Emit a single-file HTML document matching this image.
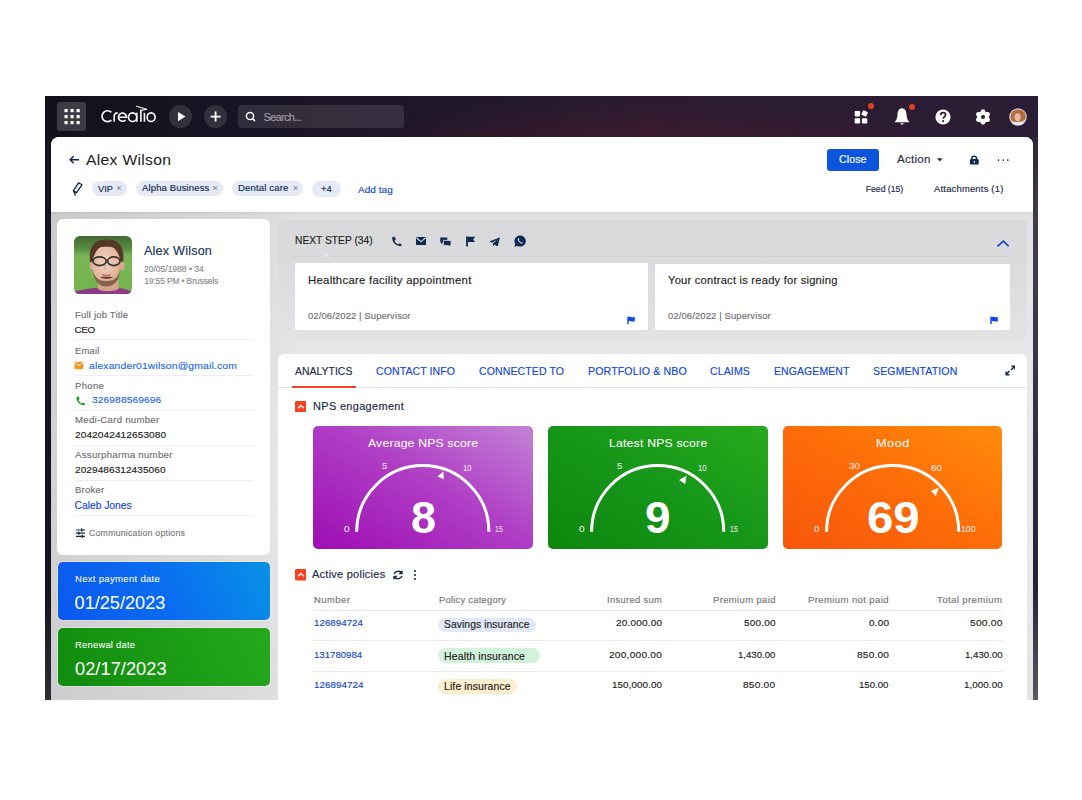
<!DOCTYPE html>
<html><head><meta charset="utf-8"><style>
html,body{margin:0;padding:0;background:#fff;width:1082px;height:800px;overflow:hidden;}
body{position:relative;font-family:"Liberation Sans",sans-serif;}
.t{position:absolute;white-space:pre;line-height:1;}
.r{position:absolute;display:block;}
</style></head><body>
<div class="r" style="left:45.0px;top:96.0px;width:993.0px;height:603.5px;background:linear-gradient(180deg,rgba(0,0,0,0) 0%,rgba(0,0,0,0) 80%,rgba(90,90,96,0.7) 100%),linear-gradient(90deg,#13111d 0%,#1c1526 40%,#2a1c30 70%,#2a1d33 100%);"></div>
<div class="r" style="left:1031.5px;top:137.0px;width:6.5px;height:562.5px;background:linear-gradient(180deg,#30243a 0%,#433d4a 15%,#3a3548 40%,#24213a 80%,#5a5a62 100%);"></div>
<div class="r" style="left:45.0px;top:137.0px;width:6.0px;height:562.5px;background:linear-gradient(180deg,#15131d 0%,#15141e 80%,#2e2e36 100%);"></div>
<div class="r" style="left:45.0px;top:96.0px;width:993.0px;height:41.0px;background:radial-gradient(ellipse 300px 36px at 590px 42px,rgba(85,25,45,0.4),rgba(85,25,45,0) 100%),linear-gradient(90deg,#13111d 0%,#1d1628 35%,#2c1b30 60%,#2b1d35 100%);"></div>
<div class="r" style="left:51.0px;top:137.0px;width:981.5px;height:562.5px;background:linear-gradient(90deg,rgba(0,0,0,0.1) 0px,rgba(0,0,0,0.04) 200px,rgba(0,0,0,0) 260px),linear-gradient(180deg,#dedee0 0%,#e6e6e8 30%,#ebebed 60%,#e4e4e6 100%);border-radius:8px 8px 0 0;"></div>
<div class="r" style="left:51.0px;top:137.0px;width:981.5px;height:75.4px;background:#fff;border-radius:8px 8px 0 0;"></div>
<div class="r" style="left:51.0px;top:212.4px;width:981.5px;height:2.6px;background:linear-gradient(180deg,rgba(0,0,0,0.05),rgba(0,0,0,0));"></div>
<div class="r" style="left:57.0px;top:102.0px;width:29.0px;height:29.0px;background:#3b3a45;border-radius:3px;"></div>
<svg class="r" style="left:57.0px;top:102.0px;" width="29.0" height="29.0" viewBox="0 0 29 29" preserveAspectRatio="none"><rect x="7.5" y="7" width="3.2" height="3.2" fill="#fff"/><rect x="13.5" y="7" width="3.2" height="3.2" fill="#fff"/><rect x="19.5" y="7" width="3.2" height="3.2" fill="#fff"/><rect x="7.5" y="13" width="3.2" height="3.2" fill="#fff"/><rect x="13.5" y="13" width="3.2" height="3.2" fill="#fff"/><rect x="19.5" y="13" width="3.2" height="3.2" fill="#fff"/><rect x="7.5" y="19" width="3.2" height="3.2" fill="#fff"/><rect x="13.5" y="19" width="3.2" height="3.2" fill="#fff"/><rect x="19.5" y="19" width="3.2" height="3.2" fill="#fff"/></svg>
<svg class="r" style="left:96.0px;top:102.0px;" width="64.0" height="24.0" viewBox="0 0 64 24" preserveAspectRatio="none"><g fill="none" stroke="#fff" stroke-width="1.6" stroke-linecap="butt"><path d="M15.4 10.4 A5.45 5.45 0 1 0 15.4 18.0"/><path d="M18.2 19.7 V14.6 C18.2 11.9 19.6 10.9 21.6 10.9"/><path d="M22.6 15.2 H30.6 A4.1 4.1 0 1 0 29.6 17.9"/><ellipse cx="36.6" cy="15.2" rx="4.1" ry="4.3"/><path d="M40.8 10.8 V19.7"/><path d="M44.9 7.6 V19.7"/><path d="M48.4 10.9 V19.7"/><ellipse cx="55.1" cy="15.2" rx="4.0" ry="4.3"/></g><path d="M40.3 4.2 L51.2 7.4 L45.6 8.3 L50.6 7.3 Z" fill="#fff" stroke="#fff" stroke-width="0.7" stroke-linejoin="round"/></svg>
<div class="r" style="left:168.8px;top:104.9px;width:23.2px;height:23.2px;background:#34303e;border-radius:50%;"></div>
<svg class="r" style="left:168.8px;top:104.9px;" width="23.2" height="23.2" viewBox="0 0 23.19999999999999 23.19999999999999" preserveAspectRatio="none"><path d="M9 7 L16.5 11.6 L9 16.2 Z" fill="#fff"/></svg>
<div class="r" style="left:203.8px;top:104.9px;width:23.2px;height:23.2px;background:#34303e;border-radius:50%;"></div>
<svg class="r" style="left:203.8px;top:104.9px;" width="23.2" height="23.2" viewBox="0 0 23.19999999999999 23.19999999999999" preserveAspectRatio="none"><path d="M11.6 6.6 V16.6 M6.6 11.6 H16.6" stroke="#fff" stroke-width="1.8"/></svg>
<div class="r" style="left:238.4px;top:105.0px;width:165.8px;height:22.8px;background:rgba(255,255,255,0.11);border-radius:3px;"></div>
<svg class="r" style="left:244.0px;top:110.0px;" width="14.0" height="14.0" viewBox="0 0 14 14" preserveAspectRatio="none"><circle cx="6" cy="6" r="3.6" fill="none" stroke="#fff" stroke-width="1.5"/><path d="M8.6 8.6 L11 11" stroke="#fff" stroke-width="1.6"/></svg>
<div class="t " style="left:263.40px;top:112px;font-size:11.05px;letter-spacing:-0.698px;color:#a29ca8;-webkit-text-stroke:0.15px #a29ca8;">Search...</div>
<svg class="r" style="left:852.0px;top:107.0px;" width="20.0" height="19.0" viewBox="0 0 20 19" preserveAspectRatio="none"><rect x="2.7" y="4" width="5.4" height="5.4" rx="0.8" fill="#fff"/><rect x="2.7" y="11.2" width="5.4" height="5.4" rx="0.8" fill="#fff"/><rect x="9.9" y="11.2" width="5.4" height="5.4" rx="0.8" fill="#fff"/><rect x="10.1" y="3.9" width="5.2" height="5.2" rx="0.8" fill="#fff" transform="rotate(25 12.7 6.5)"/></svg>
<div class="r" style="left:868.0px;top:103.3px;width:6.0px;height:6.0px;background:#e2401c;border-radius:50%;"></div>
<svg class="r" style="left:893.0px;top:106.0px;" width="18.0" height="20.0" viewBox="0 0 18 20" preserveAspectRatio="none"><path d="M9 2.2 C5.2 2.6 4.5 6 4.4 9.5 C4.3 12.5 3.2 14.5 1.6 16.2 H16.4 C14.8 14.5 13.7 12.5 13.6 9.5 C13.5 6 12.8 2.6 9 2.2 Z" fill="#fff"/><path d="M7 17.2 H11 L9 19 Z" fill="#fff"/></svg>
<div class="r" style="left:908.6px;top:103.6px;width:6.0px;height:6.0px;background:#e2401c;border-radius:50%;"></div>
<svg class="r" style="left:934.5px;top:108.6px;" width="16.0" height="16.0" viewBox="0 0 16.0 16.0" preserveAspectRatio="none"><circle cx="8" cy="8" r="7.6" fill="#fff"/><path d="M5.6 6.2 C5.6 4.6 6.7 3.7 8.1 3.7 C9.6 3.7 10.6 4.6 10.6 5.9 C10.6 7.6 8.3 7.8 8.3 9.8" fill="none" stroke="#2a1d33" stroke-width="1.7"/><circle cx="8.2" cy="12.1" r="1.1" fill="#2a1d33"/></svg>
<svg class="r" style="left:975.3px;top:108.6px;" width="16.0" height="16.0" viewBox="0 0 16.0 16.0" preserveAspectRatio="none"><g transform="translate(8 8)"><circle cx="0.00" cy="-5.30" r="2.35" fill="#fff"/><circle cx="4.59" cy="-2.65" r="2.35" fill="#fff"/><circle cx="4.59" cy="2.65" r="2.35" fill="#fff"/><circle cx="0.00" cy="5.30" r="2.35" fill="#fff"/><circle cx="-4.59" cy="2.65" r="2.35" fill="#fff"/><circle cx="-4.59" cy="-2.65" r="2.35" fill="#fff"/><circle r="5.9" fill="#fff"/><circle r="2.0" fill="#2a1d33"/></g></svg>
<svg class="r" style="left:1007.8px;top:106.7px;" width="20.0" height="20.0" viewBox="0 0 20.0 20.0" preserveAspectRatio="none"><defs><clipPath id="av"><circle cx="10" cy="10" r="8"/></clipPath></defs><circle cx="10" cy="10" r="8.8" fill="#cdc8cc"/><g clip-path="url(#av)"><rect width="20" height="20" fill="#d8d4d6"/><path d="M3 13 C1.5 7 4 2.5 10 2.5 C16 2.5 18.5 7 17.5 12 C16 14 13 15 10 15 C7 15 4.5 14.5 3 13 Z" fill="#b56c3e"/><ellipse cx="9.6" cy="10.2" rx="3" ry="4" fill="#e2b9a3"/><path d="M3 20 C4 15.5 7 14.5 10 15.5 C13 14.5 16.5 15 17 20 Z" fill="#f0eef0"/></g></svg>
<svg class="r" style="left:64.0px;top:150.0px;" width="26.0" height="20.0" viewBox="0 0 26 20" preserveAspectRatio="none"><path d="M9.6 6.2 L6.2 9.7 L9.6 13.2 M6.4 9.7 H15" fill="none" stroke="#0f2a52" stroke-width="1.5"/></svg>
<div class="t " style="left:86.10px;top:153px;font-size:14.83px;letter-spacing:0.293px;color:#1c1c20;transform:scaleX(1.0573);transform-origin:0 0;">Alex Wilson</div>
<svg class="r" style="left:64.0px;top:176.0px;" width="26.0" height="24.0" viewBox="0 0 26 24" preserveAspectRatio="none"><path d="M14.6 6.8 L18 8.8 L12.4 16.8 L9.4 14.6 Z" fill="none" stroke="#0f2a52" stroke-width="1.3" stroke-linejoin="round"/><path d="M9.6 14.8 L11.4 19.4 M9.8 16.6 L12.2 16.2" fill="none" stroke="#0f2a52" stroke-width="1.4"/></svg>
<div class="r" style="left:92.1px;top:180.6px;width:34.7px;height:15.8px;background:#e5eaf6;border-radius:8px;"></div>
<div class="t " style="left:98.00px;top:185px;font-size:9.16px;letter-spacing:0.011px;color:#0f2a52;transform:scaleX(1.0023);transform-origin:0 0;-webkit-text-stroke:0.15px #0f2a52;">VIP</div>
<div class="t " style="left:116.30px;top:184px;font-size:9.01px;letter-spacing:0.000px;color:#77777c;">×</div>
<div class="r" style="left:136.1px;top:180.6px;width:87.1px;height:15.8px;background:#e5eaf6;border-radius:8px;"></div>
<div class="t " style="left:141.60px;top:184px;font-size:9.16px;letter-spacing:0.129px;color:#0f2a52;transform:scaleX(1.0400);transform-origin:0 0;-webkit-text-stroke:0.15px #0f2a52;">Alpha Business</div>
<div class="t " style="left:212.60px;top:184px;font-size:9.01px;letter-spacing:0.000px;color:#77777c;">×</div>
<div class="r" style="left:231.8px;top:180.6px;width:71.3px;height:15.8px;background:#e5eaf6;border-radius:8px;"></div>
<div class="t " style="left:238.30px;top:184px;font-size:9.16px;letter-spacing:0.136px;color:#0f2a52;transform:scaleX(1.0437);transform-origin:0 0;-webkit-text-stroke:0.15px #0f2a52;">Dental care</div>
<div class="t " style="left:292.90px;top:184px;font-size:9.01px;letter-spacing:0.000px;color:#77777c;">×</div>
<div class="r" style="left:312.0px;top:180.8px;width:28.6px;height:16.2px;background:#e5eaf6;border-radius:8px;"></div>
<div class="t " style="left:321.20px;top:185px;font-size:9.16px;letter-spacing:0.143px;color:#0f2a52;transform:scaleX(1.0206);transform-origin:0 0;-webkit-text-stroke:0.15px #0f2a52;">+4</div>
<div class="t " style="left:358.40px;top:185px;font-size:9.88px;letter-spacing:0.050px;color:#1247d6;transform:scaleX(1.0132);transform-origin:0 0;-webkit-text-stroke:0.15px #1247d6;">Add tag</div>
<div class="r" style="left:827.4px;top:148.7px;width:51.4px;height:22.2px;background:#0b55dd;border-radius:3px;"></div>
<div class="t " style="left:839.20px;top:154px;font-size:10.76px;letter-spacing:0.012px;color:#fff;transform:scaleX(1.0026);transform-origin:0 0;-webkit-text-stroke:0.15px #fff;">Close</div>
<div class="t " style="left:896.60px;top:154px;font-size:10.90px;letter-spacing:0.248px;color:#1b2b4a;transform:scaleX(1.0620);transform-origin:0 0;-webkit-text-stroke:0.15px #1b2b4a;">Action</div>
<svg class="r" style="left:936.0px;top:157.0px;" width="8.0" height="6.0" viewBox="0 0 8 6" preserveAspectRatio="none"><path d="M1 1.2 H6.6 L3.8 4.4 Z" fill="#1b2b4a"/></svg>
<svg class="r" style="left:966.0px;top:152.0px;" width="16.0" height="16.0" viewBox="0 0 16 16" preserveAspectRatio="none"><path d="M5.8 7.5 V6 C5.8 3.6 10.4 3.6 10.4 6 V7.5" fill="none" stroke="#0f2a52" stroke-width="1.5"/><rect x="4" y="7" width="8.7" height="5.6" rx="1.2" fill="#0f2a52"/><rect x="7.8" y="8.9" width="1.1" height="2" fill="#fff"/></svg>
<svg class="r" style="left:996.0px;top:158.0px;" width="15.0" height="4.0" viewBox="0 0 15 4" preserveAspectRatio="none"><circle cx="2.5" cy="2.1" r="0.85" fill="#1b2b4a"/><circle cx="7.3" cy="2.1" r="0.85" fill="#1b2b4a"/><circle cx="11.8" cy="2.1" r="0.85" fill="#1b2b4a"/></svg>
<div class="t " style="left:865.80px;top:185px;font-size:8.72px;letter-spacing:-0.051px;color:#1b2b4a;-webkit-text-stroke:0.15px #1b2b4a;">Feed (15)</div>
<div class="t " style="left:933.70px;top:185px;font-size:8.72px;letter-spacing:0.213px;color:#1b2b4a;transform:scaleX(1.0735);transform-origin:0 0;-webkit-text-stroke:0.15px #1b2b4a;">Attachments (1)</div>
<div class="r" style="left:57.0px;top:218.8px;width:213.0px;height:336.2px;background:#fff;border-radius:6px;"></div>
<svg class="r" style="left:74.3px;top:235.7px;" width="58.0" height="58.2" viewBox="0 0 58.000000000000014 58.19999999999999" preserveAspectRatio="none"><defs><clipPath id="ph"><rect width="58" height="58.2" rx="6"/></clipPath>
<linearGradient id="grass" x1="0" y1="0" x2="0" y2="1"><stop offset="0" stop-color="#3f6a2f"/><stop offset="0.22" stop-color="#5b8c44"/><stop offset="0.35" stop-color="#7ab656"/><stop offset="1" stop-color="#72b24c"/></linearGradient>
<radialGradient id="skin" cx="0.45" cy="0.4" r="0.65"><stop offset="0" stop-color="#f2d2bf"/><stop offset="0.7" stop-color="#e3b69e"/><stop offset="1" stop-color="#c9957b"/></radialGradient></defs>
<g clip-path="url(#ph)"><rect width="58" height="58.2" fill="url(#grass)"/>
<path d="M0 58.2 L0 56 C6 54 14 52.5 22 52 L44 52 C50 52.5 55 54 58 56 L58 58.2 Z" fill="#8c3a88"/>
<path d="M24 44 L24 53 C28 56 40 56 44.5 53 L44.5 44 Z" fill="#d4a489"/>
<path d="M16.5 29 C13.5 12 19 3.6 32.5 3.4 C46 3.2 51.5 12 48.8 29 Z" fill="#553828"/><ellipse cx="48" cy="30" rx="2.6" ry="4.6" fill="#d9a990"/>
<ellipse cx="17.6" cy="30" rx="2" ry="4.2" fill="#d9a990"/>
<ellipse cx="32.5" cy="29.5" rx="14.2" ry="20.5" fill="url(#skin)"/>
<path d="M18 22 C17 10 22 4 32.5 3.8 C43 3.6 48 10 47.2 22 C46 16 44.5 13.5 42 12 C36 10.5 28 10.5 23 12 C20.5 13.5 19 16 18 22 Z" fill="#553828"/>
<path d="M18.8 33 C19.5 45 25 50.5 32.5 50.5 C40 50.5 45.5 45 46.2 33 C45 41 41 45 32.5 45 C24 45 20 41 18.8 33 Z" fill="#6f4a36" opacity="0.75"/>
<path d="M26 41.6 C29 40.2 36 40.2 39 41.6 C36 43.4 29 43.4 26 41.6 Z" fill="#6a4532"/>
<path d="M28.2 38.4 C30.5 39.6 34.5 39.6 36.8 38.4" stroke="#c27572" stroke-width="1.5" fill="none"/>
<ellipse cx="25.6" cy="25.2" rx="6.6" ry="4.4" fill="none" stroke="#3b3634" stroke-width="1.7"/>
<ellipse cx="39.8" cy="25.2" rx="6.2" ry="4.4" fill="none" stroke="#3b3634" stroke-width="1.7"/>
<path d="M32 24.6 H33.6 M19 24 L17 23.4 M46 24 L48 23.4" stroke="#3b3634" stroke-width="1.3"/>
<path d="M31.6 28 C31 31 30.6 33 32 33.6" stroke="#c4907a" stroke-width="1" fill="none"/>
</g></svg>
<div class="t " style="left:144.20px;top:245px;font-size:12.06px;letter-spacing:0.194px;color:#1b3358;transform:scaleX(1.0465);transform-origin:0 0;-webkit-text-stroke:0.15px #1b3358;">Alex Wilson</div>
<div class="t " style="left:144.20px;top:265px;font-size:8.43px;letter-spacing:0.016px;color:#8a8a90;transform:scaleX(1.0058);transform-origin:0 0;-webkit-text-stroke:0.15px #8a8a90;">20/05/1988 • 34</div>
<div class="t " style="left:144.20px;top:277px;font-size:8.43px;letter-spacing:-0.113px;color:#8a8a90;-webkit-text-stroke:0.15px #8a8a90;">19:55 PM • Brussels</div>
<div class="t " style="left:74.50px;top:311px;font-size:9.01px;letter-spacing:0.153px;color:#707076;transform:scaleX(1.0626);transform-origin:0 0;-webkit-text-stroke:0.15px #707076;">Full job Title</div>
<div class="t " style="left:74.50px;top:325px;font-size:9.88px;letter-spacing:-0.299px;color:#1e1e22;-webkit-text-stroke:0.15px #1e1e22;">CEO</div>
<div class="r" style="left:74.5px;top:339.3px;width:178.5px;height:0.8px;background:#efeff1;"></div>
<div class="t " style="left:74.50px;top:347px;font-size:9.01px;letter-spacing:0.192px;color:#707076;transform:scaleX(1.0516);transform-origin:0 0;-webkit-text-stroke:0.15px #707076;">Email</div>
<div class="t " style="left:89.00px;top:361px;font-size:9.88px;letter-spacing:0.166px;color:#1d68ef;transform:scaleX(1.0477);transform-origin:0 0;-webkit-text-stroke:0.15px #1d68ef;">alexander01wilson@gmail.com</div>
<div class="r" style="left:74.5px;top:375.3px;width:178.5px;height:0.8px;background:#efeff1;"></div>
<svg class="r" style="left:74.0px;top:361.0px;" width="10.0" height="9.0" viewBox="0 0 10 9" preserveAspectRatio="none"><path d="M0.5 0.8 H9.3 V8.2 H0.5 Z" fill="#f7941d"/><path d="M0.8 1.2 L4.9 4.8 L9 1.2" fill="none" stroke="#fff" stroke-width="1"/></svg>
<div class="t " style="left:74.50px;top:382px;font-size:9.01px;letter-spacing:0.277px;color:#707076;transform:scaleX(1.0644);transform-origin:0 0;-webkit-text-stroke:0.15px #707076;">Phone</div>
<div class="t " style="left:91.70px;top:395px;font-size:9.88px;letter-spacing:0.119px;color:#1d68ef;transform:scaleX(1.0300);transform-origin:0 0;-webkit-text-stroke:0.15px #1d68ef;">326988569696</div>
<div class="r" style="left:74.5px;top:410.0px;width:178.5px;height:0.8px;background:#efeff1;"></div>
<svg class="r" style="left:75.0px;top:395.5px;" width="10.0" height="9.0" viewBox="0 0 10 9.0" preserveAspectRatio="none"><path d="M1.6 0.8 L3.6 0.6 L4.6 3.2 L3.4 4.3 C4.2 5.8 5.4 6.9 6.8 7.6 L7.9 6.4 L10 7.4 L9.8 9.2 C5 9.4 0.8 5.4 1.6 0.8 Z" fill="#16a016"/></svg>
<div class="t " style="left:74.50px;top:416px;font-size:9.01px;letter-spacing:0.234px;color:#707076;transform:scaleX(1.0709);transform-origin:0 0;-webkit-text-stroke:0.15px #707076;">Medi-Card number</div>
<div class="t " style="left:74.50px;top:430px;font-size:9.88px;letter-spacing:0.085px;color:#1e1e22;transform:scaleX(1.0219);transform-origin:0 0;-webkit-text-stroke:0.15px #1e1e22;">2042042412653080</div>
<div class="r" style="left:74.5px;top:444.8px;width:178.5px;height:0.8px;background:#efeff1;"></div>
<div class="t " style="left:74.50px;top:451px;font-size:9.01px;letter-spacing:0.246px;color:#707076;transform:scaleX(1.0734);transform-origin:0 0;-webkit-text-stroke:0.15px #707076;">Assurpharma number</div>
<div class="t " style="left:74.50px;top:465px;font-size:9.88px;letter-spacing:0.070px;color:#1e1e22;transform:scaleX(1.0179);transform-origin:0 0;-webkit-text-stroke:0.15px #1e1e22;">2029486312435060</div>
<div class="r" style="left:74.5px;top:480.0px;width:178.5px;height:0.8px;background:#efeff1;"></div>
<div class="t " style="left:74.50px;top:486px;font-size:9.01px;letter-spacing:0.214px;color:#707076;transform:scaleX(1.0612);transform-origin:0 0;-webkit-text-stroke:0.15px #707076;">Broker</div>
<div class="t " style="left:74.50px;top:501px;font-size:10.32px;letter-spacing:-0.018px;color:#1247d6;-webkit-text-stroke:0.15px #1247d6;">Caleb Jones</div>
<div class="r" style="left:74.5px;top:515.0px;width:178.5px;height:0.8px;background:#efeff1;"></div>
<svg class="r" style="left:74.5px;top:527.5px;" width="11.0" height="10.5" viewBox="0 0 11.0 10.5" preserveAspectRatio="none"><path d="M1 2 H10 M1 5.2 H10 M1 8.4 H10" stroke="#1b2b4a" stroke-width="1.2"/><rect x="6" y="0.5" width="1.5" height="3" fill="#1b2b4a"/><rect x="3" y="3.7" width="1.5" height="3" fill="#1b2b4a"/><rect x="6.5" y="6.9" width="1.5" height="3" fill="#1b2b4a"/></svg>
<div class="t " style="left:89.00px;top:530px;font-size:8.14px;letter-spacing:0.211px;color:#7a7a80;transform:scaleX(1.0753);transform-origin:0 0;-webkit-text-stroke:0.15px #7a7a80;">Communication options</div>
<div class="r" style="left:57.9px;top:562.3px;width:211.7px;height:57.9px;background:linear-gradient(65deg,#0b58ef 0%,#0a6cf0 50%,#0892e6 100%);border-radius:5px;box-shadow:0 0 0 0.6px rgba(255,255,255,0.6);"></div>
<div class="t " style="left:74.60px;top:575px;font-size:8.72px;letter-spacing:0.279px;color:#fff;transform:scaleX(1.0929);transform-origin:0 0;-webkit-text-stroke:0.05px #fff;">Next payment date</div>
<div class="t " style="left:74.60px;top:594px;font-size:18.17px;letter-spacing:-0.015px;color:#fff;">01/25/2023</div>
<div class="r" style="left:57.9px;top:628.0px;width:211.7px;height:57.6px;background:linear-gradient(65deg,#118c0e 0%,#1a9a15 50%,#24a91c 100%);border-radius:5px;box-shadow:0 0 0 0.6px rgba(255,255,255,0.6);"></div>
<div class="t " style="left:74.60px;top:641px;font-size:8.72px;letter-spacing:0.234px;color:#fff;transform:scaleX(1.0733);transform-origin:0 0;-webkit-text-stroke:0.05px #fff;">Renewal date</div>
<div class="t " style="left:74.60px;top:660px;font-size:18.17px;letter-spacing:0.034px;color:#fff;transform:scaleX(1.0050);transform-origin:0 0;">02/17/2023</div>
<div class="r" style="left:277.8px;top:218.9px;width:748.8px;height:121.9px;background:linear-gradient(180deg,#d8d8db 0%,#dcdcdf 45%,#e3e3e5 100%);border-radius:6px;box-shadow:inset 0 0.8px 0 rgba(255,255,255,0.35);"></div>
<div class="t " style="left:294.60px;top:236px;font-size:10.17px;letter-spacing:0.022px;color:#1e1e22;transform:scaleX(1.0057);transform-origin:0 0;-webkit-text-stroke:0.15px #1e1e22;">NEXT STEP (34)</div>
<svg class="r" style="left:391.0px;top:235.5px;" width="11.0" height="10.5" viewBox="0 0 12 11" preserveAspectRatio="none"><path d="M1.5 1 L4 0.7 L5.3 3.6 L3.8 5 C4.8 6.8 6.2 8.1 7.8 8.9 L9.2 7.5 L11.5 8.6 L11.2 10.6 C5.5 10.9 0.5 6.4 1.5 1 Z" fill="#0f2a52"/></svg>
<svg class="r" style="left:416.0px;top:237.0px;" width="10.2" height="8.0" viewBox="0 0 10.199999999999989 8" preserveAspectRatio="none"><rect x="0" y="0" width="10.2" height="8" rx="0.8" fill="#0f2a52"/><path d="M0.4 0.8 L5.1 4.6 L9.8 0.8" fill="none" stroke="#dedee2" stroke-width="1.1"/></svg>
<svg class="r" style="left:440.0px;top:236.5px;" width="11.5" height="10.0" viewBox="0 0 11.5 10.0" preserveAspectRatio="none"><path d="M0.3 0.5 H7.3 V5.5 H3 L1.2 7.2 V5.5 H0.3 Z" fill="#0f2a52"/><path d="M3.4 3.4 H11 V8.5 H10 V10 L8.4 8.5 H3.4 Z" fill="#0f2a52" stroke="#dedee2" stroke-width="0.8"/></svg>
<svg class="r" style="left:466.0px;top:236.2px;" width="10.0" height="10.6" viewBox="0 0 10 10.600000000000023" preserveAspectRatio="none"><path d="M1 0.5 V10.5" stroke="#0f2a52" stroke-width="1.8"/><path d="M1.5 0.8 H9.2 L7.2 3.4 L9.2 6 H1.5 Z" fill="#0f2a52"/></svg>
<svg class="r" style="left:489.0px;top:236.5px;" width="11.5" height="9.5" viewBox="0 0 11.5 9.5" preserveAspectRatio="none"><path d="M0.3 4.6 L11 0.3 L8.6 9.6 L5.2 7.4 L4.3 9.6 L3.8 6.4 L9 2 L3 5.8 Z" fill="#0f2a52"/></svg>
<svg class="r" style="left:513.5px;top:234.8px;" width="12.2" height="12.0" viewBox="0 0 12.200000000000045 12.0" preserveAspectRatio="none"><path d="M6.1 0.4 C9.4 0.4 11.8 3 11.8 6 C11.8 9.2 9.3 11.6 6.1 11.6 C5.1 11.6 4.2 11.4 3.4 10.9 L0.4 11.7 L1.2 8.9 C0.7 8.1 0.4 7.1 0.4 6 C0.4 3 2.9 0.4 6.1 0.4 Z" fill="#0f2a52"/><path d="M3.9 3.4 C3.5 4.4 4 6.2 5.6 7.6 C7 8.8 8.3 8.9 8.9 8.2 L8.2 7.1 L7.2 7.4 C6.4 7 5.4 6 5 5.2 L5.4 4.3 L4.6 3.1 Z" fill="#dedee2"/></svg>
<div class="r" style="left:294.0px;top:255.6px;width:716.0px;height:1.2px;background:#d2d2d6;"></div>
<svg class="r" style="left:320.0px;top:251.0px;" width="12.0" height="5.8" viewBox="0 0 12 5.800000000000011" preserveAspectRatio="none"><path d="M0 5.8 L6 0.5 L12 5.8" fill="#e3e3e6" stroke="#d2d2d6" stroke-width="0.9"/></svg>
<svg class="r" style="left:996.0px;top:239.0px;" width="14.0" height="9.0" viewBox="0 0 14 9" preserveAspectRatio="none"><path d="M1.4 7.3 L7.4 2.2 L12.6 7.3" fill="none" stroke="#0b3fd6" stroke-width="1.6"/></svg>
<div class="r" style="left:294.6px;top:263.4px;width:353.0px;height:66.6px;background:#fff;border-radius:2px;"></div>
<div class="t " style="left:307.70px;top:276px;font-size:10.47px;letter-spacing:0.259px;color:#1e1e22;transform:scaleX(1.0824);transform-origin:0 0;-webkit-text-stroke:0.15px #1e1e22;">Healthcare facility appointment</div>
<div class="t " style="left:307.70px;top:312px;font-size:9.16px;letter-spacing:0.097px;color:#707076;transform:scaleX(1.0332);transform-origin:0 0;-webkit-text-stroke:0.15px #707076;">02/06/2022 | Supervisor</div>
<svg class="r" style="left:627.0px;top:315.6px;" width="8.5" height="8.4" viewBox="0 0 8.5 8.399999999999977" preserveAspectRatio="none"><path d="M1 0.8 V8" stroke="#0a45ee" stroke-width="1.4"/><path d="M1.2 0.9 C3 0.2 4.6 1.6 7.8 1 V5.4 C4.6 6 3 4.6 1.2 5.3 Z" fill="#0a45ee"/></svg>
<div class="r" style="left:654.8px;top:263.6px;width:354.9px;height:66.5px;background:#fff;border-radius:2px;"></div>
<div class="t " style="left:667.70px;top:276px;font-size:10.47px;letter-spacing:0.203px;color:#1e1e22;transform:scaleX(1.0668);transform-origin:0 0;-webkit-text-stroke:0.15px #1e1e22;">Your contract is ready for signing</div>
<div class="t " style="left:667.70px;top:312px;font-size:9.16px;letter-spacing:0.102px;color:#707076;transform:scaleX(1.0350);transform-origin:0 0;-webkit-text-stroke:0.15px #707076;">02/06/2022 | Supervisor</div>
<svg class="r" style="left:990.2px;top:315.6px;" width="8.5" height="8.4" viewBox="0 0 8.5 8.399999999999977" preserveAspectRatio="none"><path d="M1 0.8 V8" stroke="#0a45ee" stroke-width="1.4"/><path d="M1.2 0.9 C3 0.2 4.6 1.6 7.8 1 V5.4 C4.6 6 3 4.6 1.2 5.3 Z" fill="#0a45ee"/></svg>
<div class="r" style="left:277.8px;top:353.5px;width:749.2px;height:346.0px;background:#fff;border-radius:6px 6px 0 0;"></div>
<div class="t " style="left:294.60px;top:367px;font-size:10.32px;letter-spacing:0.040px;color:#1b2b4a;transform:scaleX(1.0084);transform-origin:0 0;-webkit-text-stroke:0.15px #1b2b4a;">ANALYTICS</div>
<div class="r" style="left:277.8px;top:387.4px;width:749.2px;height:0.8px;background:#e6e6ea;"></div>
<div class="r" style="left:291.5px;top:385.9px;width:64.4px;height:2.0px;background:#f4472a;"></div>
<div class="t " style="left:376.40px;top:367px;font-size:10.32px;letter-spacing:0.093px;color:#1247d6;transform:scaleX(1.0201);transform-origin:0 0;-webkit-text-stroke:0.15px #1247d6;">CONTACT INFO</div>
<div class="t " style="left:478.90px;top:367px;font-size:10.32px;letter-spacing:0.104px;color:#1247d6;transform:scaleX(1.0210);transform-origin:0 0;-webkit-text-stroke:0.15px #1247d6;">CONNECTED TO</div>
<div class="t " style="left:587.50px;top:367px;font-size:10.32px;letter-spacing:0.120px;color:#1247d6;transform:scaleX(1.0269);transform-origin:0 0;-webkit-text-stroke:0.15px #1247d6;">PORTFOLIO &amp; NBO</div>
<div class="t " style="left:709.50px;top:367px;font-size:10.32px;letter-spacing:0.115px;color:#1247d6;transform:scaleX(1.0226);transform-origin:0 0;-webkit-text-stroke:0.15px #1247d6;">CLAIMS</div>
<div class="t " style="left:773.80px;top:367px;font-size:10.32px;letter-spacing:0.089px;color:#1247d6;transform:scaleX(1.0165);transform-origin:0 0;-webkit-text-stroke:0.15px #1247d6;">ENGAGEMENT</div>
<div class="t " style="left:872.90px;top:367px;font-size:10.32px;letter-spacing:0.118px;color:#1247d6;transform:scaleX(1.0242);transform-origin:0 0;-webkit-text-stroke:0.15px #1247d6;">SEGMENTATION</div>
<svg class="r" style="left:1004.5px;top:365.0px;" width="10.5" height="11.0" viewBox="0 0 10.5 11" preserveAspectRatio="none"><path d="M6 5 L9.5 1.5 M6.5 1.2 H9.8 V4.5 M4.5 6 L1.2 9.5 M1.2 6.5 V9.8 H4.5" fill="none" stroke="#1b2b4a" stroke-width="1.5"/></svg>
<svg class="r" style="left:294.6px;top:401.0px;" width="11.7" height="11.4" viewBox="0 0 11.699999999999989 11.399999999999977" preserveAspectRatio="none"><rect width="11.7" height="11.4" rx="1.5" fill="#f8401e"/><path d="M2.9 7.2 L5.85 4.5 L8.8 7.2" fill="none" stroke="#fff" stroke-width="1.3"/></svg>
<div class="t " style="left:312.70px;top:402px;font-size:10.17px;letter-spacing:0.316px;color:#1b2b4a;transform:scaleX(1.0777);transform-origin:0 0;-webkit-text-stroke:0.15px #1b2b4a;">NPS engagement</div>
<div class="r" style="left:313.4px;top:425.5px;width:219.6px;height:123.0px;background:linear-gradient(30deg,#9e0db3 0%,#b040c6 55%,#c283d6 100%);border-radius:5px;"></div>
<div class="t " style="left:368.15px;top:437px;font-size:11.63px;letter-spacing:0.200px;color:#fff;transform:scaleX(1.0474);transform-origin:0 0;-webkit-text-stroke:0.05px #fff;">Average NPS score</div>
<svg class="r" style="left:313.4px;top:425.5px;" width="219.6" height="123.0" viewBox="0 0 219.60000000000002 123.0" preserveAspectRatio="none"><path d="M43.70 105.70 A66.1 66.1 0 0 1 175.90 105.70" fill="none" stroke="#fff" stroke-width="3.0"/><polygon points="130.30,45.50 124.50,50.60 130.90,53.20" fill="#fff"/></svg>
<div class="t " style="left:411.00px;top:496px;font-size:44.48px;letter-spacing:0.000px;color:#fff;font-weight:700;transform:scaleX(1.0128);transform-origin:0 0;">8</div>
<div class="t " style="left:343.70px;top:525px;font-size:8.58px;letter-spacing:0.000px;color:#f6eef8;transform:scaleX(1.1766);transform-origin:0 0;">0</div>
<div class="t " style="left:381.90px;top:462px;font-size:8.58px;letter-spacing:0.000px;color:#f6eef8;transform:scaleX(1.1136);transform-origin:0 0;">5</div>
<div class="t " style="left:463.30px;top:464px;font-size:8.58px;letter-spacing:0.000px;color:#f6eef8;transform:scaleX(0.8930);transform-origin:0 0;">10</div>
<div class="t " style="left:494.80px;top:525px;font-size:8.58px;letter-spacing:0.000px;color:#f6eef8;transform:scaleX(0.8194);transform-origin:0 0;">15</div>
<div class="r" style="left:548.4px;top:425.5px;width:219.4px;height:123.0px;background:linear-gradient(30deg,#0c870b 0%,#17981a 55%,#27aa1c 100%);border-radius:5px;"></div>
<div class="t " style="left:609.00px;top:437px;font-size:11.63px;letter-spacing:0.201px;color:#fff;transform:scaleX(1.0505);transform-origin:0 0;-webkit-text-stroke:0.05px #fff;">Latest NPS score</div>
<svg class="r" style="left:548.4px;top:425.5px;" width="219.4" height="123.0" viewBox="0 0 219.39999999999998 123.0" preserveAspectRatio="none"><path d="M43.60 105.70 A66.1 66.1 0 0 1 175.80 105.70" fill="none" stroke="#fff" stroke-width="3.0"/><polygon points="138.50,49.80 131.00,54.00 137.20,57.90" fill="#fff"/></svg>
<div class="t " style="left:645.40px;top:496px;font-size:44.48px;letter-spacing:0.000px;color:#fff;font-weight:700;transform:scaleX(1.0330);transform-origin:0 0;">9</div>
<div class="t " style="left:578.50px;top:525px;font-size:8.58px;letter-spacing:0.000px;color:#f6eef8;transform:scaleX(1.1766);transform-origin:0 0;">0</div>
<div class="t " style="left:616.70px;top:462px;font-size:8.58px;letter-spacing:0.000px;color:#f6eef8;transform:scaleX(1.1136);transform-origin:0 0;">5</div>
<div class="t " style="left:698.10px;top:464px;font-size:8.58px;letter-spacing:0.000px;color:#f6eef8;transform:scaleX(0.8930);transform-origin:0 0;">10</div>
<div class="t " style="left:729.60px;top:525px;font-size:8.58px;letter-spacing:0.000px;color:#f6eef8;transform:scaleX(0.8194);transform-origin:0 0;">15</div>
<div class="r" style="left:783.0px;top:425.5px;width:219.3px;height:123.0px;background:linear-gradient(30deg,#f7560a 0%,#fd6c08 50%,#ff8c0b 100%);border-radius:5px;"></div>
<div class="t " style="left:876.00px;top:437px;font-size:11.63px;letter-spacing:0.541px;color:#fff;transform:scaleX(1.0849);transform-origin:0 0;-webkit-text-stroke:0.05px #fff;">Mood</div>
<svg class="r" style="left:783.0px;top:425.5px;" width="219.3" height="123.0" viewBox="0 0 219.29999999999995 123.0" preserveAspectRatio="none"><path d="M43.55 105.70 A66.1 66.1 0 0 1 175.75 105.70" fill="none" stroke="#fff" stroke-width="3.0"/><polygon points="155.75,61.80 147.90,65.10 152.90,70.00" fill="#fff"/></svg>
<div class="t " style="left:866.90px;top:496px;font-size:44.48px;letter-spacing:0.000px;color:#fff;font-weight:700;transform:scaleX(1.0654);transform-origin:0 0;">69</div>
<div class="t " style="left:813.70px;top:525px;font-size:8.58px;letter-spacing:0.000px;color:#f6eef8;transform:scaleX(1.1346);transform-origin:0 0;">0</div>
<div class="t " style="left:848.60px;top:462px;font-size:8.58px;letter-spacing:0.000px;color:#f6eef8;transform:scaleX(1.1346);transform-origin:0 0;">30</div>
<div class="t " style="left:931.40px;top:464px;font-size:8.58px;letter-spacing:0.000px;color:#f6eef8;transform:scaleX(1.1346);transform-origin:0 0;">60</div>
<div class="t " style="left:961.40px;top:525px;font-size:8.58px;letter-spacing:0.000px;color:#f6eef8;transform:scaleX(1.0195);transform-origin:0 0;">100</div>
<svg class="r" style="left:294.6px;top:569.2px;" width="11.7" height="11.4" viewBox="0 0 11.699999999999989 11.399999999999977" preserveAspectRatio="none"><rect width="11.7" height="11.4" rx="1.5" fill="#f8401e"/><path d="M2.9 7.2 L5.85 4.5 L8.8 7.2" fill="none" stroke="#fff" stroke-width="1.3"/></svg>
<div class="t " style="left:312.20px;top:570px;font-size:10.32px;letter-spacing:0.216px;color:#1b2b4a;transform:scaleX(1.0702);transform-origin:0 0;-webkit-text-stroke:0.15px #1b2b4a;">Active policies</div>
<svg class="r" style="left:391.5px;top:568.5px;" width="12.0" height="12.0" viewBox="0 0 12.0 12.0" preserveAspectRatio="none"><path d="M10 4.2 A4.6 4.6 0 0 0 2 5" fill="none" stroke="#1b2b4a" stroke-width="1.5"/><path d="M10.6 1 V5.2 H6.4 Z" fill="#1b2b4a"/><path d="M2 7.8 A4.6 4.6 0 0 0 10 7" fill="none" stroke="#1b2b4a" stroke-width="1.5"/><path d="M1.4 11 V6.8 H5.6 Z" fill="#1b2b4a"/></svg>
<svg class="r" style="left:412.0px;top:568.5px;" width="6.0" height="12.0" viewBox="0 0 6 12.0" preserveAspectRatio="none"><circle cx="3" cy="2" r="1.1" fill="#1b2b4a"/><circle cx="3" cy="6" r="1.1" fill="#1b2b4a"/><circle cx="3" cy="10" r="1.1" fill="#1b2b4a"/></svg>
<div class="t " style="left:313.90px;top:596px;font-size:8.58px;letter-spacing:0.405px;color:#77777c;transform:scaleX(1.1012);transform-origin:0 0;-webkit-text-stroke:0.15px #77777c;">Number</div>
<div class="t " style="left:439.00px;top:596px;font-size:8.58px;letter-spacing:0.240px;color:#77777c;transform:scaleX(1.0878);transform-origin:0 0;-webkit-text-stroke:0.15px #77777c;">Policy category</div>
<div class="t " style="left:607.00px;top:596px;font-size:8.58px;letter-spacing:0.290px;color:#77777c;transform:scaleX(1.0936);transform-origin:0 0;-webkit-text-stroke:0.15px #77777c;">Insured sum</div>
<div class="t " style="left:712.70px;top:596px;font-size:8.58px;letter-spacing:0.331px;color:#77777c;transform:scaleX(1.1051);transform-origin:0 0;-webkit-text-stroke:0.15px #77777c;">Premium paid</div>
<div class="t " style="left:808.20px;top:596px;font-size:8.58px;letter-spacing:0.336px;color:#77777c;transform:scaleX(1.1145);transform-origin:0 0;-webkit-text-stroke:0.15px #77777c;">Premium not paid</div>
<div class="t " style="left:937.40px;top:596px;font-size:8.58px;letter-spacing:0.348px;color:#77777c;transform:scaleX(1.1184);transform-origin:0 0;-webkit-text-stroke:0.15px #77777c;">Total premium</div>
<div class="r" style="left:313.4px;top:609.6px;width:689.6px;height:1.0px;background:#ebebee;"></div>
<div class="r" style="left:313.4px;top:640.4px;width:689.6px;height:1.0px;background:#ebebee;"></div>
<div class="r" style="left:313.4px;top:670.8px;width:689.6px;height:1.0px;background:#ebebee;"></div>
<div class="t " style="left:313.50px;top:618px;font-size:9.59px;letter-spacing:0.049px;color:#1247d6;transform:scaleX(1.0123);transform-origin:0 0;-webkit-text-stroke:0.15px #1247d6;">126894724</div>
<div class="r" style="left:438.4px;top:617.6px;width:97.9px;height:14.5px;background:#e2e8f6;border-radius:7.5px;"></div>
<div class="t " style="left:444.40px;top:620px;font-size:10.03px;letter-spacing:0.090px;color:#1e1e22;transform:scaleX(1.0266);transform-origin:0 0;-webkit-text-stroke:0.15px #1e1e22;">Savings insurance</div>
<div class="t " style="left:616.10px;top:618px;font-size:9.59px;letter-spacing:0.167px;color:#1e1e22;transform:scaleX(1.0472);transform-origin:0 0;-webkit-text-stroke:0.15px #1e1e22;">20.000.00</div>
<div class="t " style="left:743.80px;top:618px;font-size:9.59px;letter-spacing:0.176px;color:#1e1e22;transform:scaleX(1.0452);transform-origin:0 0;-webkit-text-stroke:0.15px #1e1e22;">500.00</div>
<div class="t " style="left:868.60px;top:618px;font-size:9.59px;letter-spacing:0.201px;color:#1e1e22;transform:scaleX(1.0488);transform-origin:0 0;-webkit-text-stroke:0.15px #1e1e22;">0.00</div>
<div class="t " style="left:969.80px;top:618px;font-size:9.59px;letter-spacing:0.244px;color:#1e1e22;transform:scaleX(1.0630);transform-origin:0 0;-webkit-text-stroke:0.15px #1e1e22;">500.00</div>
<div class="t " style="left:313.50px;top:650px;font-size:9.59px;letter-spacing:0.009px;color:#1247d6;transform:scaleX(1.0023);transform-origin:0 0;-webkit-text-stroke:0.15px #1247d6;">131780984</div>
<div class="r" style="left:438.4px;top:648.2px;width:101.4px;height:14.4px;background:#d3f2dc;border-radius:7.5px;"></div>
<div class="t " style="left:444.40px;top:652px;font-size:10.03px;letter-spacing:0.149px;color:#1e1e22;transform:scaleX(1.0450);transform-origin:0 0;-webkit-text-stroke:0.15px #1e1e22;">Health insurance</div>
<div class="t " style="left:609.30px;top:650px;font-size:9.59px;letter-spacing:0.211px;color:#1e1e22;transform:scaleX(1.0599);transform-origin:0 0;-webkit-text-stroke:0.15px #1e1e22;">200,000.00</div>
<div class="t " style="left:738.00px;top:650px;font-size:9.59px;letter-spacing:0.002px;color:#1e1e22;-webkit-text-stroke:0.15px #1e1e22;">1,430.00</div>
<div class="t " style="left:856.80px;top:650px;font-size:9.59px;letter-spacing:0.206px;color:#1e1e22;transform:scaleX(1.0531);transform-origin:0 0;-webkit-text-stroke:0.15px #1e1e22;">850.00</div>
<div class="t " style="left:964.60px;top:650px;font-size:9.59px;letter-spacing:0.019px;color:#1e1e22;transform:scaleX(1.0054);transform-origin:0 0;-webkit-text-stroke:0.15px #1e1e22;">1,430.00</div>
<div class="t " style="left:313.50px;top:680px;font-size:9.59px;letter-spacing:0.074px;color:#1247d6;transform:scaleX(1.0185);transform-origin:0 0;-webkit-text-stroke:0.15px #1247d6;">126894724</div>
<div class="r" style="left:438.4px;top:679.3px;width:78.8px;height:14.6px;background:#fdeecf;border-radius:7.5px;"></div>
<div class="t " style="left:444.40px;top:682px;font-size:10.03px;letter-spacing:0.126px;color:#1e1e22;transform:scaleX(1.0395);transform-origin:0 0;-webkit-text-stroke:0.15px #1e1e22;">Life insurance</div>
<div class="t " style="left:612.10px;top:680px;font-size:9.59px;letter-spacing:0.092px;color:#1e1e22;transform:scaleX(1.0259);transform-origin:0 0;-webkit-text-stroke:0.15px #1e1e22;">150,000.00</div>
<div class="t " style="left:743.30px;top:680px;font-size:9.59px;letter-spacing:0.214px;color:#1e1e22;transform:scaleX(1.0551);transform-origin:0 0;-webkit-text-stroke:0.15px #1e1e22;">850.00</div>
<div class="t " style="left:859.30px;top:680px;font-size:9.59px;letter-spacing:0.012px;color:#1e1e22;transform:scaleX(1.0030);transform-origin:0 0;-webkit-text-stroke:0.15px #1e1e22;">150.00</div>
<div class="t " style="left:963.60px;top:680px;font-size:9.59px;letter-spacing:0.075px;color:#1e1e22;transform:scaleX(1.0213);transform-origin:0 0;-webkit-text-stroke:0.15px #1e1e22;">1,000.00</div>
</body></html>
